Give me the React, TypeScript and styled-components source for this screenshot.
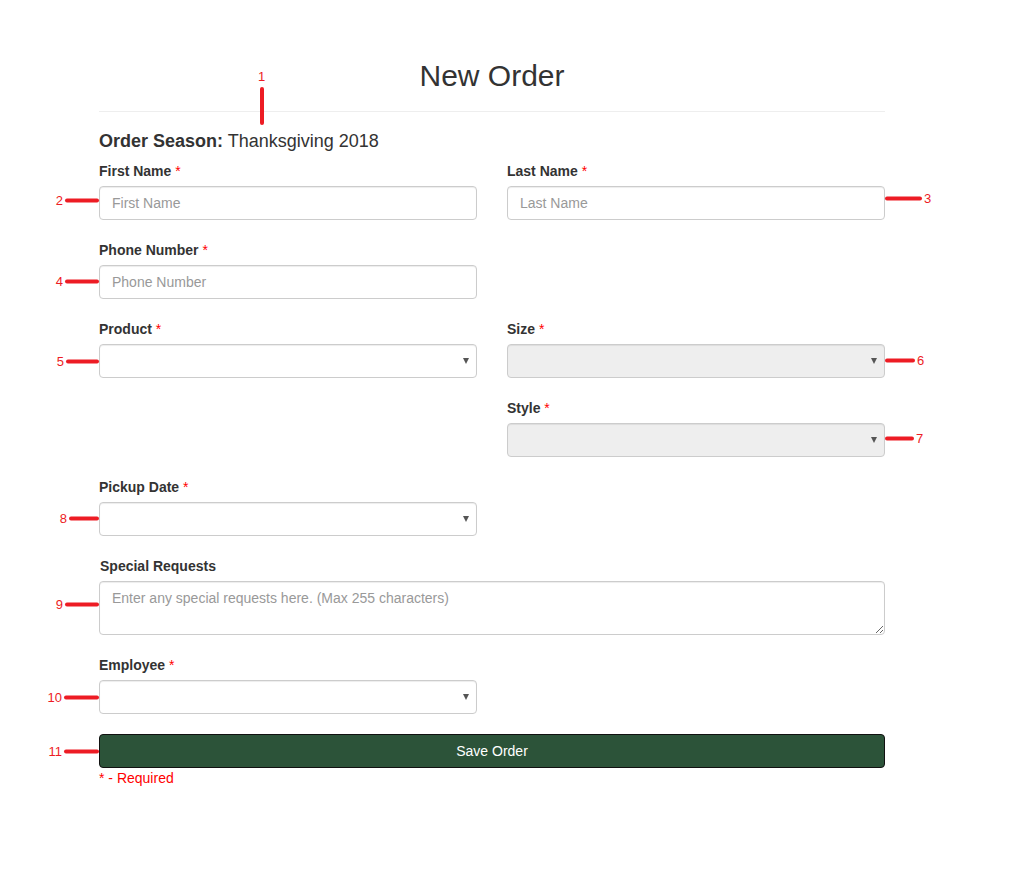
import React from 'react'
import styled, { createGlobalStyle } from 'styled-components'

const GlobalStyle = createGlobalStyle`
  body {
    margin: 0;
    background: #fff;
    font-family: "Liberation Sans", Arial, sans-serif;
    font-size: 14px;
    color: #333;
  }
  * { box-sizing: border-box; }
`;

const Page = styled.div`
  width: 786px;
  margin-left: 99px;
  padding-top: 59px;
  padding-bottom: 80px;
`;

const Header = styled.header`
  position: relative;
  border-bottom: 1px solid #eee;
  padding-bottom: 19px;
`;

const Title = styled.h1`
  margin: 0;
  font-size: 30px;
  line-height: 33px;
  font-weight: 400;
  text-align: center;
  color: #333;
`;

const Season = styled.h4`
  margin: 19px 0 10px;
  font-size: 18px;
  line-height: 20px;
  font-weight: 400;
  b { font-weight: 700; }
`;

const Row = styled.div`
  display: grid;
  grid-template-columns: 378px 378px;
  column-gap: 30px;
`;

const Field = styled.div<{ $col?: number; $wide?: boolean }>`
  grid-column: ${p => (p.$wide ? '1 / span 2' : p.$col === 2 ? '2' : '1')};
  margin-bottom: 20px;
`;

const Label = styled.label<{ $shift?: boolean }>`
  display: block;
  margin: 0 0 5px ${p => (p.$shift ? '1px' : '0')};
  font-weight: 700;
  line-height: 20px;
  color: #333;
`;

const Req = styled.span`
  color: red;
  font-weight: 400;
`;

const ControlWrap = styled.div`
  position: relative;
`;

const controlCss = `
  display: block;
  width: 100%;
  height: 34px;
  padding: 6px 12px;
  font-family: "Liberation Sans", Arial, sans-serif;
  font-size: 14px;
  line-height: 20px;
  color: #555;
  background: #fff;
  border: 1px solid #ccc;
  border-radius: 4px;
  box-shadow: inset 0 1px 1px rgba(0, 0, 0, 0.075);
  outline: none;
  &::placeholder { color: #999; }
`;

const Input = styled.input`
  ${controlCss}
`;

const Textarea = styled.textarea`
  ${controlCss}
  height: 54px;
  resize: vertical;
`;

const Select = styled.select<{ $off?: boolean }>`
  ${controlCss}
  appearance: none;
  background: ${p => (p.$off ? '#eee' : '#fff')};
  &:disabled {
    background: #eee;
    opacity: 1;
  }
`;

const Arrow = styled.span`
  position: absolute;
  right: 8px;
  top: 14px;
  width: 0;
  height: 0;
  border-left: 3.5px solid transparent;
  border-right: 3.5px solid transparent;
  border-top: 6px solid #555;
  pointer-events: none;
`;

const SaveButton = styled.button`
  display: block;
  width: 100%;
  height: 34px;
  background: #2c5339;
  color: #fff;
  border: 1px solid #111;
  border-radius: 4px;
  font-family: "Liberation Sans", Arial, sans-serif;
  font-size: 14px;
`;

const Note = styled.div`
  color: red;
  line-height: 20px;
`;

/* red review annotations lying over the form */
const Marker = styled.div<{ $side: 'left' | 'right' }>`
  position: absolute;
  ${p => (p.$side === 'left' ? 'right: 100%;' : 'left: 100%;')}
  display: flex;
  align-items: center;
  gap: 2px;
  transform: translateY(-50%);
  pointer-events: none;
`;

const MarkLine = styled.span`
  display: block;
  height: 4px;
  background: #ed1c24;
  border-radius: 2px;
`;

const MarkNum = styled.span`
  color: #ed1c24;
  font-family: "Liberation Sans", Arial, sans-serif;
  font-size: 13px;
  line-height: 15px;
`;

const TopMarker = styled.div`
  position: absolute;
  left: 159px;
  top: 10px;
  display: flex;
  flex-direction: column;
  align-items: center;
  gap: 3px;
`;

const VLine = styled.span`
  display: block;
  width: 4px;
  height: 38px;
  background: #ed1c24;
  border-radius: 2px;
`;

const Mark = ({ n, side, dy, len }: { n: string; side: 'left' | 'right'; dy: number; len: number }) => (
  <Marker $side={side} style={{ top: dy }}>
    {side === 'left' ? (
      <>
        <MarkNum>{n}</MarkNum>
        <MarkLine style={{ width: len }} />
      </>
    ) : (
      <>
        <MarkLine style={{ width: len }} />
        <MarkNum>{n}</MarkNum>
      </>
    )}
  </Marker>
);

const App = () => {
  return (
    <>
      <GlobalStyle />
      <Page>
        <Header>
          <Title>New Order</Title>
          <TopMarker>
            <MarkNum>1</MarkNum>
            <VLine />
          </TopMarker>
        </Header>
        <Season>
          <b>Order Season:</b> Thanksgiving 2018
        </Season>
        <Row>
          <Field>
            <Label>First Name <Req>*</Req></Label>
            <ControlWrap>
              <Input placeholder="First Name" />
              <Mark n="2" side="left" dy={14} len={34} />
            </ControlWrap>
          </Field>
          <Field $col={2}>
            <Label>Last Name <Req>*</Req></Label>
            <ControlWrap>
              <Input placeholder="Last Name" />
              <Mark n="3" side="right" dy={12} len={37} />
            </ControlWrap>
          </Field>
          <Field>
            <Label>Phone Number <Req>*</Req></Label>
            <ControlWrap>
              <Input placeholder="Phone Number" />
              <Mark n="4" side="left" dy={16} len={34} />
            </ControlWrap>
          </Field>
        </Row>
        <Row>
          <Field>
            <Label>Product <Req>*</Req></Label>
            <ControlWrap>
              <Select defaultValue="">
                <option value="" />
              </Select>
              <Arrow />
              <Mark n="5" side="left" dy={17} len={33} />
            </ControlWrap>
          </Field>
          <Field $col={2}>
            <Label>Size <Req>*</Req></Label>
            <ControlWrap>
              <Select $off disabled defaultValue="">
                <option value="" />
              </Select>
              <Arrow />
              <Mark n="6" side="right" dy={16} len={30} />
            </ControlWrap>
          </Field>
          <Field $col={2}>
            <Label>Style <Req>*</Req></Label>
            <ControlWrap>
              <Select $off disabled defaultValue="">
                <option value="" />
              </Select>
              <Arrow />
              <Mark n="7" side="right" dy={15} len={29} />
            </ControlWrap>
          </Field>
          <Field>
            <Label>Pickup Date <Req>*</Req></Label>
            <ControlWrap>
              <Select defaultValue="">
                <option value="" />
              </Select>
              <Arrow />
              <Mark n="8" side="left" dy={16} len={30} />
            </ControlWrap>
          </Field>
          <Field $wide>
            <Label $shift>Special Requests</Label>
            <ControlWrap>
              <Textarea placeholder="Enter any special requests here. (Max 255 characters)" />
              <Mark n="9" side="left" dy={23} len={34} />
            </ControlWrap>
          </Field>
          <Field>
            <Label>Employee <Req>*</Req></Label>
            <ControlWrap>
              <Select defaultValue="">
                <option value="" />
              </Select>
              <Arrow />
              <Mark n="10" side="left" dy={17} len={35} />
            </ControlWrap>
          </Field>
        </Row>
        <ControlWrap>
          <SaveButton>Save Order</SaveButton>
          <Mark n="11" side="left" dy={17} len={35} />
        </ControlWrap>
        <Note>* - Required</Note>
      </Page>
    </>
  )
}

export default App
